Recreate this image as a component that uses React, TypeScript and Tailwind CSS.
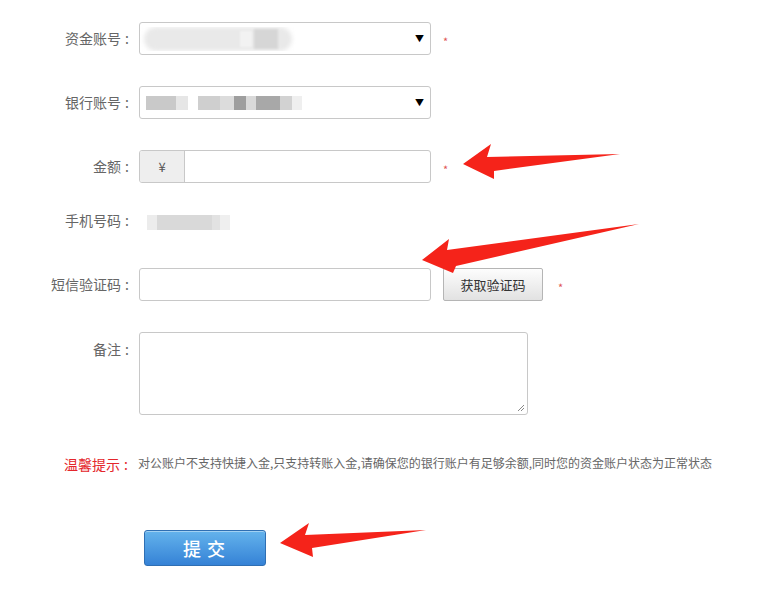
import React from "react";

const font = { fontFamily: '"Microsoft YaHei", "Noto Sans CJK SC", sans-serif' };

const Colon = () => <span className="ml-[4px] mr-[2px]">:</span>;

const Label = ({ text }: { text: string }) => (
  <div className="w-[131px] shrink-0 text-right text-[14px] text-[#666]">
    {text}
    <Colon />
  </div>
);

const Star = () => <span className="text-[11px] text-[#e05555]">*</span>;

const FakeSelect = ({ children }: { children: React.ReactNode }) => (
  <div className="relative flex h-[33px] w-[292px] items-center rounded-[3px] border border-[#c8c8c8] bg-white">
    <div className="flex-1 overflow-hidden">{children}</div>
    <span className="pr-[6px] text-[9px] text-black">▼</span>
  </div>
);

const Arrows = () => (
  <svg className="pointer-events-none absolute left-0 top-0" width="778" height="599">
    <g fill="#f5231a">
      <polygon points="463,164 491,144 487,157 620,154 494,171 494,179" />
      <polygon points="422,260 449,239 447,250 639,224 456,266 453,273" />
      <polygon points="280,543 309,523 305,535 426,530 312,548 313,557" />
    </g>
  </svg>
);

export default function App() {
  return (
    <div className="relative h-[599px] w-[778px] overflow-hidden bg-white" style={font}>
      <div className="flex flex-col pt-[22px]">
        {/* 资金账号 */}
        <div className="flex h-[33px] items-center gap-2">
          <Label text="资金账号" />
          <FakeSelect>
            <div className="relative ml-[4px] h-[24px] w-[148px]">
              <div className="absolute inset-0 rounded-full bg-[#e9e9e9] blur-[2px]" />
              <div className="absolute left-[110px] top-[2px] h-[20px] w-[24px] bg-[#d6d6d6] blur-[1px]" />
              <div className="absolute left-[96px] top-[4px] h-[16px] w-[12px] bg-[#f2f2f2] blur-[1px]" />
            </div>
          </FakeSelect>
          <span className="ml-[4px]">
            <Star />
          </span>
        </div>

        {/* 银行账号 */}
        <div className="mt-[31px] flex h-[33px] items-center gap-2">
          <Label text="银行账号" />
          <FakeSelect>
            <div className="ml-[6px] flex h-[14px] items-center blur-[0.5px]">
              <div className="h-full w-[30px] bg-[#c9c9c9]" />
              <div className="h-full w-[12px] bg-[#e6e6e6]" />
              <div className="h-full w-[10px] bg-white" />
              <div className="h-full w-[22px] bg-[#cfcfcf]" />
              <div className="h-full w-[14px] bg-[#dcdcdc]" />
              <div className="h-full w-[12px] bg-[#9e9e9e]" />
              <div className="h-full w-[10px] bg-[#d9d9d9]" />
              <div className="h-full w-[24px] bg-[#a8a8a8]" />
              <div className="h-full w-[12px] bg-[#d2d2d2]" />
              <div className="h-full w-[10px] bg-[#efefef]" />
            </div>
          </FakeSelect>
        </div>

        {/* 金额 */}
        <div className="mt-[31px] flex h-[33px] items-center gap-2">
          <Label text="金额" />
          <div className="flex h-[33px] w-[292px] overflow-hidden rounded-[3px] border border-[#c8c8c8] bg-white">
            <div className="flex w-[45px] items-center justify-center border-r border-[#c8c8c8] bg-[#eeeeee] text-[13px] text-[#555]">
              ¥
            </div>
            <div className="flex-1" />
          </div>
          <span className="ml-[4px]">
            <Star />
          </span>
        </div>

        {/* 手机号码 */}
        <div className="mt-[21px] flex h-[33px] items-center gap-2">
          <Label text="手机号码" />
          <div className="ml-[8px] mt-[3px] flex h-[15px] items-center blur-[0.6px]">
            <div className="h-full w-[10px] bg-[#ececec]" />
            <div className="h-full w-[55px] bg-[#d9d9d9]" />
            <div className="h-full w-[8px] bg-[#e2e2e2]" />
            <div className="h-full w-[10px] bg-[#efefef]" />
          </div>
        </div>

        {/* 短信验证码 */}
        <div className="mt-[31px] flex h-[33px] items-center gap-2">
          <Label text="短信验证码" />
          <div className="h-[33px] w-[292px] rounded-[3px] border border-[#c8c8c8] bg-white" />
          <button className="ml-[4px] h-[33px] w-[100px] rounded-[2px] border border-[#b5b5b5] bg-gradient-to-b from-[#fdfdfd] to-[#e2e2e2] text-[13px] text-[#333]">
            获取验证码
          </button>
          <span className="ml-[7px]">
            <Star />
          </span>
        </div>

        {/* 备注 */}
        <div className="mt-[31px] flex items-start gap-2">
          <div className="pt-[7px]">
            <Label text="备注" />
          </div>
          <div className="relative h-[83px] w-[389px] rounded-[3px] border border-[#c8c8c8] bg-white">
            <svg className="absolute bottom-[2px] right-[2px]" width="8" height="8">
              <line x1="1" y1="7" x2="7" y2="1" stroke="#888" strokeWidth="1" />
              <line x1="4" y1="7" x2="7" y2="4" stroke="#888" strokeWidth="1" />
            </svg>
          </div>
        </div>

        {/* 温馨提示 */}
        <div className="mt-[36px] flex items-center">
          <div className="w-[138px] shrink-0 pl-[64px]">
            <span className="text-[14px] text-[#e4262b]">
              温馨提示
              <Colon />
            </span>
          </div>
          <span className="text-[12px] text-[#666]">
            对公账户不支持快捷入金,只支持转账入金,请确保您的银行账户有足够余额,同时您的资金账户状态为正常状态
          </span>
        </div>

        {/* 提交 */}
        <div className="mt-[55px] pl-[144px]">
          <button className="h-[36px] w-[122px] rounded-[3px] border border-[#2f6fb3] bg-gradient-to-b from-[#64b3ec] to-[#3582d6] pl-[4px] text-[18px] font-medium tracking-[6px] text-white shadow-[inset_0_1px_0_rgba(255,255,255,0.4)]">
            提交
          </button>
        </div>
      </div>
      <Arrows />
    </div>
  );
}
